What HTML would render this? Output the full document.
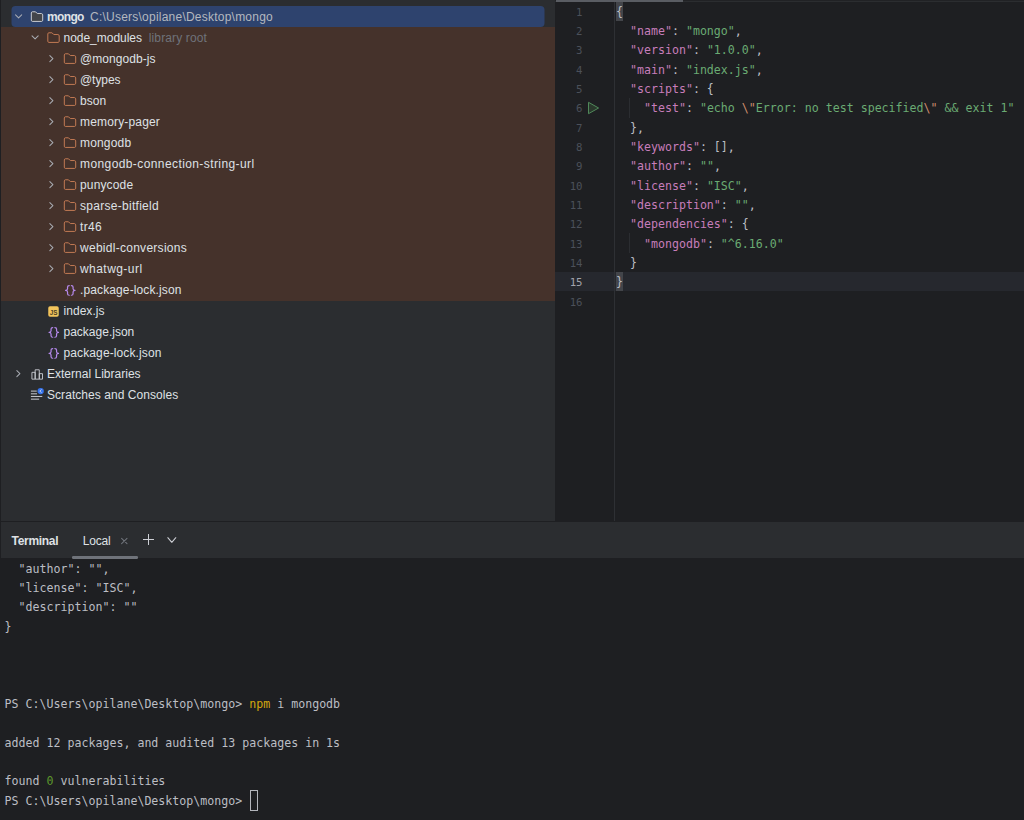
<!DOCTYPE html>
<html><head><meta charset="utf-8"><title>mongo</title>
<style>
*{box-sizing:border-box;margin:0;padding:0}
html,body{width:1024px;height:820px;overflow:hidden;background:#2b2d30}
body{position:relative;font-family:"Liberation Sans","DejaVu Sans",sans-serif;font-size:12px;color:#dfe1e5}
.abs{position:absolute}
#left{left:0;top:0;width:555px;height:521px;background:#2b2d30}
#lstrip{left:0;top:0;width:1px;height:820px;background:#1e1f22}
#brown{left:1px;top:27px;width:554px;height:273.5px;background:#45322b}
#sel{left:11.5px;top:6px;width:533px;height:21px;background:#2e436e;border-radius:4px}
.row{position:absolute;height:21px;line-height:21px;white-space:pre;padding-top:1px}
#editor{left:555px;top:0;width:469px;height:521px;background:#1e1f22}
#etop{left:0;top:0;width:469px;height:2px;background:linear-gradient(#212225 0,#212225 50%,#2b2d30 50%,#2b2d30 100%)}
#etab{left:1px;top:0;width:127px;height:2px;background:#5a5d63}
#gline{left:59px;top:2px;width:1px;height:519px;background:#2e3034}
#curline{left:0;top:272px;width:469px;height:19px;background:#26282e}
.mono{font-family:"DejaVu Sans Mono","Liberation Mono",monospace;font-size:11.627px}
.ln{position:absolute;left:0;width:27.5px;text-align:right;color:#4b5059;font-size:10.7px;height:19.33px;line-height:19.33px}
.cl{position:absolute;left:61px;white-space:pre;color:#bcbec4;height:19.33px;line-height:19.33px}
.k{color:#c77dbb}.s{color:#6aab73}.e{color:#cf8e6d}
.bh{position:absolute;left:61px;width:7px;height:19px;background:#43454a}
.ig{position:absolute;left:74px;width:1px;background:#2b2d31}
#hsep{left:0;top:521px;width:1024px;height:1px;background:#1e1f22}
#thead{left:0;top:522px;width:1024px;height:36px;background:#2b2d30}
#uline{left:72px;top:556px;width:65.5px;height:2.6px;border-radius:1.3px;background:#6f737a}
#term{left:0;top:558px;width:1024px;height:262px;background:#1e1f22}
.tl{position:absolute;left:4.6px;white-space:pre;color:#bcbec4;height:19.33px;line-height:19.33px}
#cursor{left:250px;top:232px;width:8px;height:21px;border:1px solid #b4b6bc}
</style></head><body>
<div id="left" class="abs"><div id="brown" class="abs"></div>
<svg class="abs" style="left:0;top:0" width="555" height="521" viewBox="0 0 555 521">
<rect x="11.5" y="6" width="533" height="21" rx="4" fill="#2e436e"/>
<g transform="translate(11.60 9.60) scale(0.87500)" fill="none"><path d="M11.5 6L8 9.5L4.5 6" stroke="#a9acb3" stroke-width="1.15" stroke-linecap="round" stroke-linejoin="round"/></g>
<g transform="translate(30.00 9.60) scale(0.87500)" fill="none"><path d="M8.10584 4.34613L8.25344 4.5H8.46667H13C13.8284 4.5 14.5 5.17157 14.5 6V12.1333C14.5 12.9529 13.932 13.5 13.3667 13.5H2.63333C2.06804 13.5 1.5 12.9529 1.5 12.1333V3.86667C1.5 3.04707 2.06804 2.5 2.63333 2.5H6.12201C6.25837 2.5 6.38881 2.55569 6.48316 2.65418L8.10584 4.34613Z" fill="#43454a" stroke="#ced0d6" stroke-width="1.1"/></g>
<g transform="translate(28.10 30.60) scale(0.87500)" fill="none"><path d="M11.5 6L8 9.5L4.5 6" stroke="#a9acb3" stroke-width="1.15" stroke-linecap="round" stroke-linejoin="round"/></g>
<g transform="translate(46.50 30.60) scale(0.87500)" fill="none"><path d="M8.10584 4.34613L8.25344 4.5H8.46667H13C13.8284 4.5 14.5 5.17157 14.5 6V12.1333C14.5 12.9529 13.932 13.5 13.3667 13.5H2.63333C2.06804 13.5 1.5 12.9529 1.5 12.1333V3.86667C1.5 3.04707 2.06804 2.5 2.63333 2.5H6.12201C6.25837 2.5 6.38881 2.55569 6.48316 2.65418L8.10584 4.34613Z" fill="none" stroke="#c77d55" stroke-width="1.1"/></g>
<g transform="translate(44.60 51.60) scale(0.87500)" fill="none"><path d="M6 11.5L9.5 8L6 4.5" stroke="#a9acb3" stroke-width="1.15" stroke-linecap="round" stroke-linejoin="round"/></g>
<g transform="translate(63.00 51.60) scale(0.87500)" fill="none"><path d="M8.10584 4.34613L8.25344 4.5H8.46667H13C13.8284 4.5 14.5 5.17157 14.5 6V12.1333C14.5 12.9529 13.932 13.5 13.3667 13.5H2.63333C2.06804 13.5 1.5 12.9529 1.5 12.1333V3.86667C1.5 3.04707 2.06804 2.5 2.63333 2.5H6.12201C6.25837 2.5 6.38881 2.55569 6.48316 2.65418L8.10584 4.34613Z" fill="none" stroke="#c77d55" stroke-width="1.1"/></g>
<g transform="translate(44.60 72.60) scale(0.87500)" fill="none"><path d="M6 11.5L9.5 8L6 4.5" stroke="#a9acb3" stroke-width="1.15" stroke-linecap="round" stroke-linejoin="round"/></g>
<g transform="translate(63.00 72.60) scale(0.87500)" fill="none"><path d="M8.10584 4.34613L8.25344 4.5H8.46667H13C13.8284 4.5 14.5 5.17157 14.5 6V12.1333C14.5 12.9529 13.932 13.5 13.3667 13.5H2.63333C2.06804 13.5 1.5 12.9529 1.5 12.1333V3.86667C1.5 3.04707 2.06804 2.5 2.63333 2.5H6.12201C6.25837 2.5 6.38881 2.55569 6.48316 2.65418L8.10584 4.34613Z" fill="none" stroke="#c77d55" stroke-width="1.1"/></g>
<g transform="translate(44.60 93.60) scale(0.87500)" fill="none"><path d="M6 11.5L9.5 8L6 4.5" stroke="#a9acb3" stroke-width="1.15" stroke-linecap="round" stroke-linejoin="round"/></g>
<g transform="translate(63.00 93.60) scale(0.87500)" fill="none"><path d="M8.10584 4.34613L8.25344 4.5H8.46667H13C13.8284 4.5 14.5 5.17157 14.5 6V12.1333C14.5 12.9529 13.932 13.5 13.3667 13.5H2.63333C2.06804 13.5 1.5 12.9529 1.5 12.1333V3.86667C1.5 3.04707 2.06804 2.5 2.63333 2.5H6.12201C6.25837 2.5 6.38881 2.55569 6.48316 2.65418L8.10584 4.34613Z" fill="none" stroke="#c77d55" stroke-width="1.1"/></g>
<g transform="translate(44.60 114.60) scale(0.87500)" fill="none"><path d="M6 11.5L9.5 8L6 4.5" stroke="#a9acb3" stroke-width="1.15" stroke-linecap="round" stroke-linejoin="round"/></g>
<g transform="translate(63.00 114.60) scale(0.87500)" fill="none"><path d="M8.10584 4.34613L8.25344 4.5H8.46667H13C13.8284 4.5 14.5 5.17157 14.5 6V12.1333C14.5 12.9529 13.932 13.5 13.3667 13.5H2.63333C2.06804 13.5 1.5 12.9529 1.5 12.1333V3.86667C1.5 3.04707 2.06804 2.5 2.63333 2.5H6.12201C6.25837 2.5 6.38881 2.55569 6.48316 2.65418L8.10584 4.34613Z" fill="none" stroke="#c77d55" stroke-width="1.1"/></g>
<g transform="translate(44.60 135.60) scale(0.87500)" fill="none"><path d="M6 11.5L9.5 8L6 4.5" stroke="#a9acb3" stroke-width="1.15" stroke-linecap="round" stroke-linejoin="round"/></g>
<g transform="translate(63.00 135.60) scale(0.87500)" fill="none"><path d="M8.10584 4.34613L8.25344 4.5H8.46667H13C13.8284 4.5 14.5 5.17157 14.5 6V12.1333C14.5 12.9529 13.932 13.5 13.3667 13.5H2.63333C2.06804 13.5 1.5 12.9529 1.5 12.1333V3.86667C1.5 3.04707 2.06804 2.5 2.63333 2.5H6.12201C6.25837 2.5 6.38881 2.55569 6.48316 2.65418L8.10584 4.34613Z" fill="none" stroke="#c77d55" stroke-width="1.1"/></g>
<g transform="translate(44.60 156.60) scale(0.87500)" fill="none"><path d="M6 11.5L9.5 8L6 4.5" stroke="#a9acb3" stroke-width="1.15" stroke-linecap="round" stroke-linejoin="round"/></g>
<g transform="translate(63.00 156.60) scale(0.87500)" fill="none"><path d="M8.10584 4.34613L8.25344 4.5H8.46667H13C13.8284 4.5 14.5 5.17157 14.5 6V12.1333C14.5 12.9529 13.932 13.5 13.3667 13.5H2.63333C2.06804 13.5 1.5 12.9529 1.5 12.1333V3.86667C1.5 3.04707 2.06804 2.5 2.63333 2.5H6.12201C6.25837 2.5 6.38881 2.55569 6.48316 2.65418L8.10584 4.34613Z" fill="none" stroke="#c77d55" stroke-width="1.1"/></g>
<g transform="translate(44.60 177.60) scale(0.87500)" fill="none"><path d="M6 11.5L9.5 8L6 4.5" stroke="#a9acb3" stroke-width="1.15" stroke-linecap="round" stroke-linejoin="round"/></g>
<g transform="translate(63.00 177.60) scale(0.87500)" fill="none"><path d="M8.10584 4.34613L8.25344 4.5H8.46667H13C13.8284 4.5 14.5 5.17157 14.5 6V12.1333C14.5 12.9529 13.932 13.5 13.3667 13.5H2.63333C2.06804 13.5 1.5 12.9529 1.5 12.1333V3.86667C1.5 3.04707 2.06804 2.5 2.63333 2.5H6.12201C6.25837 2.5 6.38881 2.55569 6.48316 2.65418L8.10584 4.34613Z" fill="none" stroke="#c77d55" stroke-width="1.1"/></g>
<g transform="translate(44.60 198.60) scale(0.87500)" fill="none"><path d="M6 11.5L9.5 8L6 4.5" stroke="#a9acb3" stroke-width="1.15" stroke-linecap="round" stroke-linejoin="round"/></g>
<g transform="translate(63.00 198.60) scale(0.87500)" fill="none"><path d="M8.10584 4.34613L8.25344 4.5H8.46667H13C13.8284 4.5 14.5 5.17157 14.5 6V12.1333C14.5 12.9529 13.932 13.5 13.3667 13.5H2.63333C2.06804 13.5 1.5 12.9529 1.5 12.1333V3.86667C1.5 3.04707 2.06804 2.5 2.63333 2.5H6.12201C6.25837 2.5 6.38881 2.55569 6.48316 2.65418L8.10584 4.34613Z" fill="none" stroke="#c77d55" stroke-width="1.1"/></g>
<g transform="translate(44.60 219.60) scale(0.87500)" fill="none"><path d="M6 11.5L9.5 8L6 4.5" stroke="#a9acb3" stroke-width="1.15" stroke-linecap="round" stroke-linejoin="round"/></g>
<g transform="translate(63.00 219.60) scale(0.87500)" fill="none"><path d="M8.10584 4.34613L8.25344 4.5H8.46667H13C13.8284 4.5 14.5 5.17157 14.5 6V12.1333C14.5 12.9529 13.932 13.5 13.3667 13.5H2.63333C2.06804 13.5 1.5 12.9529 1.5 12.1333V3.86667C1.5 3.04707 2.06804 2.5 2.63333 2.5H6.12201C6.25837 2.5 6.38881 2.55569 6.48316 2.65418L8.10584 4.34613Z" fill="none" stroke="#c77d55" stroke-width="1.1"/></g>
<g transform="translate(44.60 240.60) scale(0.87500)" fill="none"><path d="M6 11.5L9.5 8L6 4.5" stroke="#a9acb3" stroke-width="1.15" stroke-linecap="round" stroke-linejoin="round"/></g>
<g transform="translate(63.00 240.60) scale(0.87500)" fill="none"><path d="M8.10584 4.34613L8.25344 4.5H8.46667H13C13.8284 4.5 14.5 5.17157 14.5 6V12.1333C14.5 12.9529 13.932 13.5 13.3667 13.5H2.63333C2.06804 13.5 1.5 12.9529 1.5 12.1333V3.86667C1.5 3.04707 2.06804 2.5 2.63333 2.5H6.12201C6.25837 2.5 6.38881 2.55569 6.48316 2.65418L8.10584 4.34613Z" fill="none" stroke="#c77d55" stroke-width="1.1"/></g>
<g transform="translate(44.60 261.60) scale(0.87500)" fill="none"><path d="M6 11.5L9.5 8L6 4.5" stroke="#a9acb3" stroke-width="1.15" stroke-linecap="round" stroke-linejoin="round"/></g>
<g transform="translate(63.00 261.60) scale(0.87500)" fill="none"><path d="M8.10584 4.34613L8.25344 4.5H8.46667H13C13.8284 4.5 14.5 5.17157 14.5 6V12.1333C14.5 12.9529 13.932 13.5 13.3667 13.5H2.63333C2.06804 13.5 1.5 12.9529 1.5 12.1333V3.86667C1.5 3.04707 2.06804 2.5 2.63333 2.5H6.12201C6.25837 2.5 6.38881 2.55569 6.48316 2.65418L8.10584 4.34613Z" fill="none" stroke="#c77d55" stroke-width="1.1"/></g>
<g transform="translate(63.00 282.60) scale(0.87500)" fill="none"><path transform="translate(0 0.95)" d="M7.1 2.5C5.7 2.5 5.2 3.1 5.2 4.2V6.1C5.2 7.2 4.5 7.85 3 8C4.5 8.15 5.2 8.8 5.2 9.9V11.8C5.2 12.9 5.7 13.5 7.1 13.5M9.6 2.5C11 2.5 11.5 3.1 11.5 4.2V6.1C11.5 7.2 12.2 7.85 13.7 8C12.2 8.15 11.5 8.8 11.5 9.9V11.8C11.5 12.9 11 13.5 9.6 13.5" stroke="#b589ec" stroke-width="1.4" stroke-linecap="round" stroke-linejoin="round" fill="none"/></g>
<g transform="translate(46.50 303.60) scale(0.87500)" fill="none"><rect x="2" y="2.9" width="12" height="12.2" rx="2" fill="#f2c55c"/><text x="8.1" y="12.9" text-anchor="middle" font-family="Liberation Sans,sans-serif" font-weight="bold" font-size="7.2" fill="#4a4024">JS</text></g>
<g transform="translate(46.50 324.60) scale(0.87500)" fill="none"><path transform="translate(0 0.95)" d="M7.1 2.5C5.7 2.5 5.2 3.1 5.2 4.2V6.1C5.2 7.2 4.5 7.85 3 8C4.5 8.15 5.2 8.8 5.2 9.9V11.8C5.2 12.9 5.7 13.5 7.1 13.5M9.6 2.5C11 2.5 11.5 3.1 11.5 4.2V6.1C11.5 7.2 12.2 7.85 13.7 8C12.2 8.15 11.5 8.8 11.5 9.9V11.8C11.5 12.9 11 13.5 9.6 13.5" stroke="#b589ec" stroke-width="1.4" stroke-linecap="round" stroke-linejoin="round" fill="none"/></g>
<g transform="translate(46.50 345.60) scale(0.87500)" fill="none"><path transform="translate(0 0.95)" d="M7.1 2.5C5.7 2.5 5.2 3.1 5.2 4.2V6.1C5.2 7.2 4.5 7.85 3 8C4.5 8.15 5.2 8.8 5.2 9.9V11.8C5.2 12.9 5.7 13.5 7.1 13.5M9.6 2.5C11 2.5 11.5 3.1 11.5 4.2V6.1C11.5 7.2 12.2 7.85 13.7 8C12.2 8.15 11.5 8.8 11.5 9.9V11.8C11.5 12.9 11 13.5 9.6 13.5" stroke="#b589ec" stroke-width="1.4" stroke-linecap="round" stroke-linejoin="round" fill="none"/></g>
<g transform="translate(11.60 366.60) scale(0.87500)" fill="none"><path d="M6 11.5L9.5 8L6 4.5" stroke="#a9acb3" stroke-width="1.15" stroke-linecap="round" stroke-linejoin="round"/></g>
<g transform="translate(30.00 366.60) scale(0.87500)" fill="none"><path transform="translate(0 0.95)" d="M2.2 5.6H5.9V13.4H2.2ZM5.9 2.7H10.6V13.4H5.9ZM10.6 7.1H14.3V13.4H10.6Z" stroke="#ced0d6" stroke-width="1" fill="none" stroke-linejoin="round"/></g>
<g transform="translate(30.00 387.60) scale(0.87500)" fill="none"><path d="M1.5 4H7.3M1.5 7.1H7.6M1.5 10.1H13.6M1.5 13.2H10" stroke="#ced0d6" stroke-width="1.1" stroke-linecap="round"/><circle cx="12.2" cy="4" r="3.6" fill="#3574f0"/><path d="M12.9 2.4L11.2 4L12.9 5.4" stroke="#dfe1e5" stroke-width="0.9" fill="none" stroke-linecap="round" stroke-linejoin="round"/></g>
</svg>
<div class="row" style="left:47px;top:6.10px;letter-spacing:-0.650px;font-weight:bold">mongo</div>
<div class="row" style="left:63.5px;top:27.12px;letter-spacing:-0.020px">node_modules</div>
<div class="row" style="left:80px;top:48.14px;letter-spacing:0.055px">@mongodb-js</div>
<div class="row" style="left:80px;top:69.16px;letter-spacing:-0.062px">@types</div>
<div class="row" style="left:80px;top:90.18px;letter-spacing:0.055px">bson</div>
<div class="row" style="left:80px;top:111.20px;letter-spacing:0.164px">memory-pager</div>
<div class="row" style="left:80px;top:132.22px;letter-spacing:0.172px">mongodb</div>
<div class="row" style="left:80px;top:153.24px;letter-spacing:0.405px">mongodb-connection-string-url</div>
<div class="row" style="left:80px;top:174.26px;letter-spacing:0.150px">punycode</div>
<div class="row" style="left:80px;top:195.28px;letter-spacing:0.286px">sparse-bitfield</div>
<div class="row" style="left:80px;top:216.30px;letter-spacing:0.328px">tr46</div>
<div class="row" style="left:80px;top:237.32px;letter-spacing:0.275px">webidl-conversions</div>
<div class="row" style="left:80px;top:258.34px;letter-spacing:0.447px">whatwg-url</div>
<div class="row" style="left:80px;top:279.36px;letter-spacing:0.117px">.package-lock.json</div>
<div class="row" style="left:63.5px;top:300.38px;letter-spacing:0.039px">index.js</div>
<div class="row" style="left:63.5px;top:321.40px;letter-spacing:0.003px">package.json</div>
<div class="row" style="left:63.5px;top:342.42px;letter-spacing:0.114px">package-lock.json</div>
<div class="row" style="left:47px;top:363.44px;letter-spacing:0.012px">External Libraries</div>
<div class="row" style="left:47px;top:384.46px;letter-spacing:0.051px">Scratches and Consoles</div>
<div class="row" style="left:90px;top:6.10px;color:#b4b8bf;letter-spacing:0.230px">C:\Users\opilane\Desktop\mongo</div>
<div class="row" style="left:148.75px;top:27.12px;color:#6f737a;letter-spacing:0.130px">library root</div>
</div>
<div id="editor" class="abs mono"><div id="etop" class="abs"></div><div id="etab" class="abs"></div><div id="curline" class="abs"></div><div id="gline" class="abs"></div><div class="bh" style="top:2px"></div><div class="bh" style="top:272px"></div>
<div class="ig" style="top:98px;height:20px"></div><div class="ig" style="top:233px;height:20px"></div>
<svg class="abs" style="left:0;top:0" width="60" height="521" viewBox="0 0 60 521" fill="none"><path d="M33.5 102.3L43.6 108L33.5 113.7Z" fill="#2a382c" stroke="#50895a" stroke-width="1" stroke-linejoin="round"/></svg>
<div class="ln" style="top:2.60px">1</div>
<div class="cl" style="top:2.60px">{</div>
<div class="ln" style="top:21.93px">2</div>
<div class="cl" style="top:21.93px">  <span class="k">&quot;name&quot;</span>: <span class="s">&quot;mongo&quot;</span>,</div>
<div class="ln" style="top:41.27px">3</div>
<div class="cl" style="top:41.27px">  <span class="k">&quot;version&quot;</span>: <span class="s">&quot;1.0.0&quot;</span>,</div>
<div class="ln" style="top:60.60px">4</div>
<div class="cl" style="top:60.60px">  <span class="k">&quot;main&quot;</span>: <span class="s">&quot;index.js&quot;</span>,</div>
<div class="ln" style="top:79.93px">5</div>
<div class="cl" style="top:79.93px">  <span class="k">&quot;scripts&quot;</span>: {</div>
<div class="ln" style="top:99.26px">6</div>
<div class="cl" style="top:99.26px">    <span class="k">&quot;test&quot;</span>: <span class="s">&quot;echo </span><span class="e">\&quot;</span><span class="s">Error: no test specified</span><span class="e">\&quot;</span><span class="s"> &amp;&amp; exit 1&quot;</span></div>
<div class="ln" style="top:118.60px">7</div>
<div class="cl" style="top:118.60px">  },</div>
<div class="ln" style="top:137.93px">8</div>
<div class="cl" style="top:137.93px">  <span class="k">&quot;keywords&quot;</span>: [],</div>
<div class="ln" style="top:157.26px">9</div>
<div class="cl" style="top:157.26px">  <span class="k">&quot;author&quot;</span>: <span class="s">&quot;&quot;</span>,</div>
<div class="ln" style="top:176.60px">10</div>
<div class="cl" style="top:176.60px">  <span class="k">&quot;license&quot;</span>: <span class="s">&quot;ISC&quot;</span>,</div>
<div class="ln" style="top:195.93px">11</div>
<div class="cl" style="top:195.93px">  <span class="k">&quot;description&quot;</span>: <span class="s">&quot;&quot;</span>,</div>
<div class="ln" style="top:215.26px">12</div>
<div class="cl" style="top:215.26px">  <span class="k">&quot;dependencies&quot;</span>: {</div>
<div class="ln" style="top:234.60px">13</div>
<div class="cl" style="top:234.60px">    <span class="k">&quot;mongodb&quot;</span>: <span class="s">&quot;^6.16.0&quot;</span></div>
<div class="ln" style="top:253.93px">14</div>
<div class="cl" style="top:253.93px">  }</div>
<div class="ln" style="color:#a1a3ab;top:273.26px">15</div>
<div class="cl" style="top:273.26px">}</div>
<div class="ln" style="top:292.60px">16</div>
</div>
<div id="hsep" class="abs"></div>
<div id="thead" class="abs">
<div class="row" style="left:11.5px;top:8px;color:#dfe1e5;letter-spacing:-0.291px;font-weight:bold">Terminal</div>
<div class="row" style="left:82.75px;top:8px;color:#dfe1e5;letter-spacing:-0.188px">Local</div>
<svg class="abs" style="left:0;top:0" width="200" height="36" viewBox="0 0 200 36" fill="none">
<path d="M121.6 16.3L127 21.7M127 16.3L121.6 21.7" stroke="#6f737a" stroke-width="1.05" stroke-linecap="round"/>
<path d="M148.5 12.4V22.6M143.4 17.5H153.6" stroke="#ced0d6" stroke-width="1" stroke-linecap="round"/>
<path d="M167.8 15.7L171.8 20.3L175.8 15.7" stroke="#ced0d6" stroke-width="1.05" stroke-linecap="round" stroke-linejoin="round"/>
</svg>
</div>
<div id="term" class="abs mono">
<div class="tl" style="top:1.60px">  "author": "",</div>
<div class="tl" style="top:20.93px">  "license": "ISC",</div>
<div class="tl" style="top:40.27px">  "description": ""</div>
<div class="tl" style="top:59.60px">}</div>
<div class="tl" style="top:136.93px">PS C:\Users\opilane\Desktop\mongo> <span style="color:#d4a80e">npm</span> i mongodb</div>
<div class="tl" style="top:175.60px">added 12 packages, and audited 13 packages in 1s</div>
<div class="tl" style="top:214.26px">found <span style="color:#5c962c">0</span> vulnerabilities</div>
<div class="tl" style="top:233.60px">PS C:\Users\opilane\Desktop\mongo> </div>
<div id="cursor" class="abs"></div>
</div>
<div id="uline" class="abs"></div>
<div id="lstrip" class="abs"></div>
</body></html>
